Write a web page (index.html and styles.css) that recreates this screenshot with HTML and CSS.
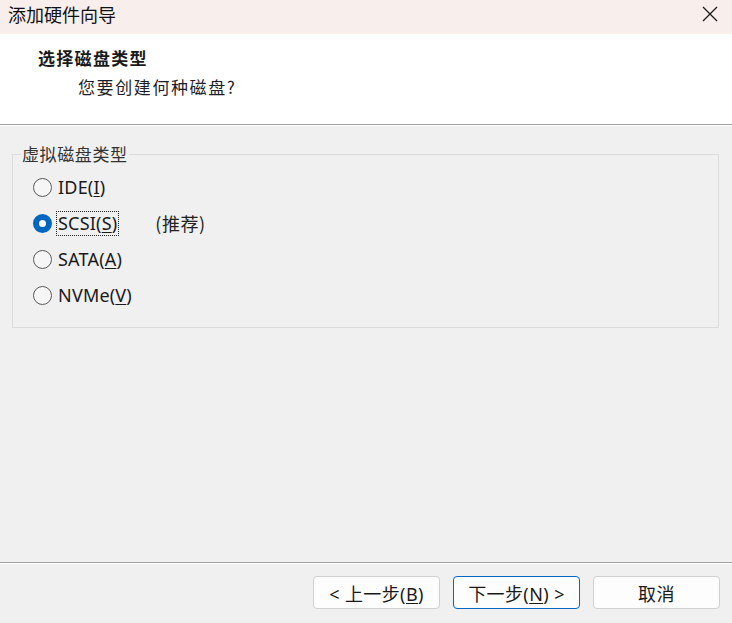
FILE: index.html
```html
<!DOCTYPE html>
<html lang="zh-CN">
<head>
<meta charset="utf-8">
<title>添加硬件向导</title>
<link rel="stylesheet" href="styles.css">
</head>
<body>
<div class="window">
  <div class="titlebar">
    <span class="title">添加硬件向导</span>
    <span class="close">
      <svg width="16" height="16" viewBox="0 0 16 16"><path d="M1 1 L15 15 M15 1 L1 15" stroke="#1a1a1a" stroke-width="1.3" fill="none"/></svg>
    </span>
  </div>
  <div class="header">
    <div class="h-title">选择磁盘类型</div>
    <div class="h-sub">您要创建何种磁盘?</div>
  </div>
  <div class="content">
    <fieldset class="group">
      <legend>虚拟磁盘类型</legend>
      <div class="rows">
        <div class="row"><span class="radio"></span><span class="label">IDE(<u>I</u>)</span></div>
        <div class="row"><span class="radio checked"></span><span class="label focus">SCSI(<u>S</u>)</span><span class="rec">(推荐)</span></div>
        <div class="row"><span class="radio"></span><span class="label">SATA(<u>A</u>)</span></div>
        <div class="row"><span class="radio"></span><span class="label">NVMe(<u>V</u>)</span></div>
      </div>
    </fieldset>
  </div>
  <div class="footer">
    <button class="btn">&lt; 上一步(<u>B</u>)</button>
    <button class="btn primary">下一步(<u>N</u>) &gt;</button>
    <button class="btn">取消</button>
  </div>
</div>
</body>
</html>
```
FILE: styles.css
```css
* { box-sizing: border-box; }
html, body { margin: 0; padding: 0; }
body {
  width: 732px;
  height: 623px;
  overflow: hidden;
  background: #f0f0f0;
  font-family: "Noto Sans", "Noto Sans CJK SC", sans-serif;
  color: #1a1a1a;
}
.window {
  width: 732px;
  height: 623px;
  display: flex;
  flex-direction: column;
  background: #f0f0f0;
}
.titlebar {
  height: 34px;
  background: #f8eeec;
  display: flex;
  align-items: center;
  justify-content: space-between;
  padding: 0 14px 0 8px;
  flex: none;
}
.title {
  font-family: "Noto Sans CJK SC", sans-serif;
  font-size: 18px;
  color: #111;
  line-height: 1;
  margin-top: -6px;
}
.close { display: flex; margin-top: -6px; }
.header {
  height: 91px;
  background: #fff;
  border-bottom: 1px solid #a0a0a0;
  box-shadow: 0 1px 0 #ffffff;
  flex: none;
  padding: 12px 0 0 38px;
  font-family: "Noto Sans CJK SC", sans-serif;
}
.h-title {
  font-size: 17px;
  font-weight: bold;
  line-height: 24px;
  letter-spacing: 1.3px;
}
.h-sub {
  font-size: 17px;
  line-height: 24px;
  margin-left: 40px;
  margin-top: 5px;
  letter-spacing: 1.6px;
  color: #1e1e2a;
}
.content {
  flex: 1;
  padding: 19px 13px 0 12px;
}
.group {
  margin: 0;
  border: 1px solid #dcdcdc;
  padding: 5px 0 0 0;
  height: 184px;
}
.group legend {
  font-family: "Noto Sans CJK SC", sans-serif;
  font-size: 17px;
  padding: 0 1px;
  margin-left: 8px;
  line-height: 20px;
  color: #333;
  letter-spacing: 0.6px;
}
.rows { padding-left: 20px; }
.row {
  height: 36px;
  display: flex;
  align-items: center;
  font-size: 18px;
}
.radio {
  width: 19px;
  height: 19px;
  border: 1px solid #5a5a5a;
  border-radius: 50%;
  background: #f6f6f6;
  flex: none;
  margin-right: 4px;
}
.radio.checked {
  border: 6px solid #0067c0;
  background: #fff;
}
.label {
  padding: 0 1px;
  border: 1px dotted transparent;
  line-height: 23px;
  letter-spacing: 0.2px;
}
.label.focus { border-color: #222; }
.rec {
  font-family: "Noto Sans CJK SC", sans-serif;
  margin-left: 36px;
  font-size: 18px;
  color: #222;
  letter-spacing: 0.5px;
}
.footer {
  height: 61px;
  flex: none;
  border-top: 1px solid #a0a0a0;
  box-shadow: inset 0 1px 0 #fff;
  display: flex;
  justify-content: flex-end;
  gap: 13px;
  padding: 13px 12px 0 0;
}
.btn {
  width: 127px;
  height: 33px;
  background: #fdfdfd;
  border: 1px solid #d0d0d0;
  border-radius: 4px;
  font-family: "Noto Sans", "Noto Sans CJK SC", sans-serif;
  font-size: 18px;
  letter-spacing: 0.4px;
  color: #1a1a1a;
  padding: 0;
}
.btn.primary {
  border-color: #0067c0;
}
u { text-decoration-thickness: 1px; text-underline-offset: 2px; }
```
